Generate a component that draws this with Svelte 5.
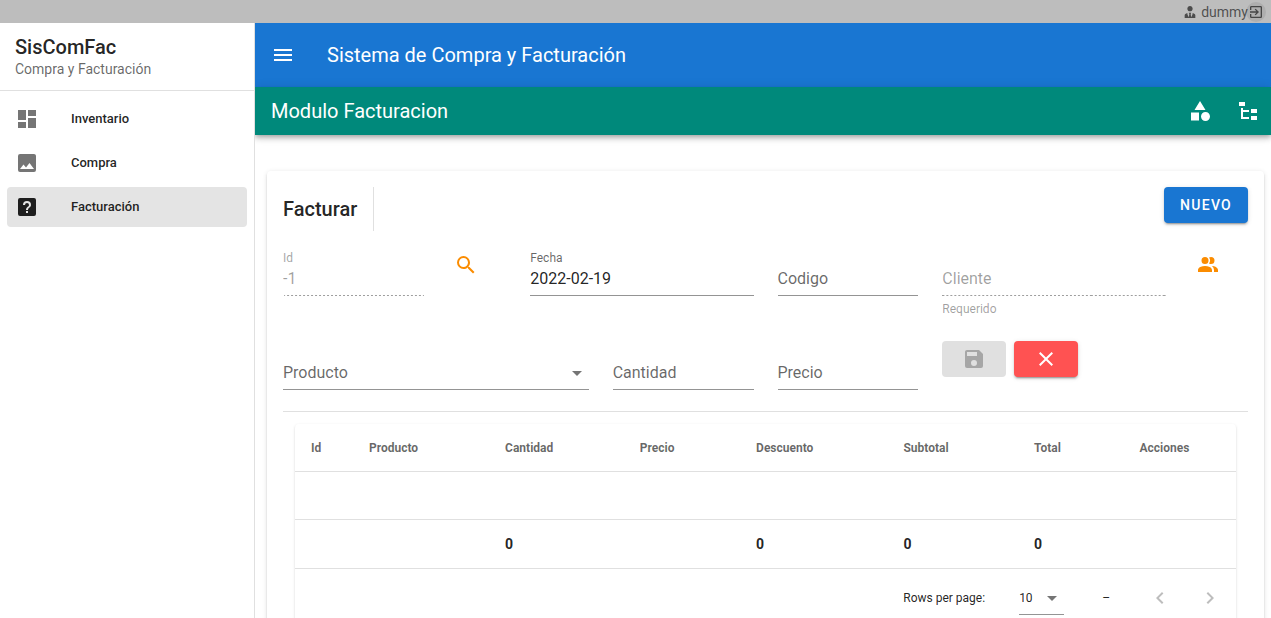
<script>
  const icons = {
    dashboard: 'M13,3V9H21V3M13,21H21V11H13M3,21H11V15H3M3,13H11V3H3V13Z',
    image: 'M8.5,13.5L11,16.5L14.5,12L19,18H5M21,19V5C21,3.89 20.1,3 19,3H5A2,2 0 0,0 3,5V19A2,2 0 0,0 5,21H19A2,2 0 0,0 21,19Z',
    help: 'M11,18H13V16H11V18M12,6A4,4 0 0,0 8,10H10A2,2 0 0,1 12,8A2,2 0 0,1 14,10C14,12 11,11.75 11,15H13C13,12.75 16,12.5 16,10A4,4 0 0,0 12,6M5,3H19A2,2 0 0,1 21,5V19A2,2 0 0,1 19,21H5A2,2 0 0,1 3,19V5A2,2 0 0,1 5,3Z',
    menu: 'M3,6H21V8H3V6M3,11H21V13H3V11M3,16H21V18H3V16Z',
    shape: 'M11,13.5V21.5H3V13.5H11M12,2L17.5,11H6.5L12,2M17.5,13C20,13 22,15 22,17.5C22,20 20,22 17.5,22C15,22 13,20 13,17.5C13,15 15,13 17.5,13Z',
    tree: 'M3,3H9V7H3V3M15,10H21V14H15V10M15,17H21V21H15V17M13,13H7V18H13V20H7L5,20V9H7V11H13V13Z',
    magnify: 'M9.5,3A6.5,6.5 0 0,1 16,9.5C16,11.11 15.41,12.59 14.44,13.73L14.71,14H15.5L20.5,19L19,20.5L14,15.5V14.71L13.73,14.44C12.59,15.41 11.11,16 9.5,16A6.5,6.5 0 0,1 3,9.5A6.5,6.5 0 0,1 9.5,3M9.5,5C7,5 5,7 5,9.5C5,12 7,14 9.5,14C12,14 14,12 14,9.5C14,7 12,5 9.5,5Z',
    people: 'M16 17V19H2V17S2 13 9 13 16 17 16 17M12.5 7.5A3.5 3.5 0 1 0 9 11A3.5 3.5 0 0 0 12.5 7.5M15.94 13A5.32 5.32 0 0 1 18 17V19H22V17S22 13.37 15.94 13M15 4A3.39 3.39 0 0 0 13.07 4.59A5 5 0 0 1 13.07 10.41A3.39 3.39 0 0 0 15 11A3.5 3.5 0 0 0 15 4Z',
    save: 'M15,9H5V5H15M12,19A3,3 0 0,1 9,16A3,3 0 0,1 12,13A3,3 0 0,1 15,16A3,3 0 0,1 12,19M17,3H5C3.89,3 3,3.9 3,5V19A2,2 0 0,0 5,21H19A2,2 0 0,0 21,19V7L17,3Z',
    close: 'M19,6.41L17.59,5L12,10.59L6.41,5L5,6.41L10.59,12L5,17.59L6.41,19L12,13.41L17.59,19L19,17.59L13.41,12L19,6.41Z',
    exit: 'M19,3H5C3.89,3 3,3.89 3,5V9H5V5H19V19H5V15H3V19A2,2 0 0,0 5,21H19A2,2 0 0,0 21,19V5C21,3.89 20.1,3 19,3M10.08,15.58L11.5,17L16.5,12L11.5,7L10.08,8.41L12.67,11H3V13H12.67L10.08,15.58Z',
    tie: 'M12 3C14.21 3 16 4.79 16 7S14.21 11 12 11 8 9.21 8 7 9.79 3 12 3M16 13.54C16 14.6 15.72 17.07 13.81 19.83L13 15L13.94 13.12C13.32 13.05 12.67 13 12 13S10.68 13.05 10.06 13.12L11 15L10.19 19.83C8.28 17.07 8 14.6 8 13.54C5.61 14.24 4 15.5 4 17V21H20V17C20 15.5 18.4 14.24 16 13.54Z',
    caret: 'M7,10L12,15L17,10H7Z',
    left: 'M15.41,16.58L10.83,12L15.41,7.41L14,6L8,12L14,18L15.41,16.58Z',
    right: 'M8.59,16.58L13.17,12L8.59,7.41L10,6L16,12L10,18L8.59,16.58Z',
  };

  const nav = [
    { label: 'Inventario', icon: 'dashboard' },
    { label: 'Compra', icon: 'image' },
    { label: 'Facturación', icon: 'help', active: true },
  ];

  const columns = [
    { label: 'Id' },
    { label: 'Producto', sortable: true },
    { label: 'Cantidad', sortable: true, total: 0 },
    { label: 'Precio', sortable: true },
    { label: 'Descuento', sortable: true, total: 0 },
    { label: 'Subtotal', sortable: true, total: 0 },
    { label: 'Total', sortable: true, total: 0 },
    { label: 'Acciones' },
  ];

  let fecha = $state('2022-02-19');
  let codigo = $state('');
  let cantidad = $state('');
  let precio = $state('');
  let producto = $state('');
  let rows = $state('10');
</script>

{#snippet icon(name, size = 24)}
  <svg viewBox="0 0 24 24" width={size} height={size} aria-hidden="true"><path d={icons[name]} /></svg>
{/snippet}

<div class="app">
  <div class="system-bar">
    {@render icon('tie', 16)}
    <span>dummy</span>
    <button class="exit" aria-label="Salir">{@render icon('exit', 16)}</button>
  </div>

  <div class="shell">
    <aside class="drawer">
      <div class="brand">
        <div class="brand-title">SisComFac</div>
        <div class="brand-sub">Compra y Facturación</div>
      </div>
      <nav>
        {#each nav as item}
          <a href="#{item.icon}" class:active={item.active}>
            {@render icon(item.icon)}
            <span>{item.label}</span>
          </a>
        {/each}
      </nav>
    </aside>

    <div class="content">
      <header class="app-bar">
        <button class="icon-btn" aria-label="Menú">{@render icon('menu')}</button>
        <h1>Sistema de Compra y Facturación</h1>
      </header>
      <div class="module-bar">
        <h2>Modulo Facturacion</h2>
        <button class="icon-btn" aria-label="Categorías">{@render icon('shape')}</button>
        <button class="icon-btn" aria-label="Árbol">{@render icon('tree')}</button>
      </div>

      <main>
        <section class="card">
          <div class="card-head">
            <h3>Facturar</h3>
            <button class="btn primary">NUEVO</button>
          </div>

          <form class="form">
            <div class="field span2 disabled">
              <label class="float" for="id">Id</label>
              <input id="id" type="text" value="-1" disabled />
            </div>
            <div>
              <button type="button" class="icon-btn accent" aria-label="Buscar">{@render icon('magnify')}</button>
            </div>
            <div class="field span3">
              <label class="float" for="fecha">Fecha</label>
              <input id="fecha" type="text" bind:value={fecha} />
            </div>
            <div class="field span2">
              <label class:float={codigo} for="codigo">Codigo</label>
              <input id="codigo" type="text" bind:value={codigo} />
            </div>
            <div class="field span3 disabled">
              <label for="cliente">Cliente</label>
              <input id="cliente" type="text" disabled />
              <div class="hint">Requerido</div>
            </div>
            <div>
              <button type="button" class="icon-btn accent" aria-label="Clientes">{@render icon('people')}</button>
            </div>

            <div class="field span4">
              <label class:float={producto} for="producto">Producto</label>
              <select id="producto" bind:value={producto}><option value=""></option></select>
              <span class="caret">{@render icon('caret')}</span>
            </div>
            <div class="field span2">
              <label class:float={cantidad} for="cantidad">Cantidad</label>
              <input id="cantidad" type="text" bind:value={cantidad} />
            </div>
            <div class="field span2">
              <label class:float={precio} for="precio">Precio</label>
              <input id="precio" type="text" bind:value={precio} />
            </div>
            <div class="actions span4">
              <button type="button" class="btn" disabled aria-label="Guardar">{@render icon('save')}</button>
              <button type="button" class="btn danger" aria-label="Cancelar">{@render icon('close')}</button>
            </div>
          </form>

          <hr />

          <div class="table-card">
            <table>
              <thead>
                <tr>
                  {#each columns as c}<th class:sortable={c.sortable}>{c.label}</th>{/each}
                </tr>
              </thead>
              <tbody>
                <tr><td colspan="8"></td></tr>
                <tr class="totals">
                  {#each columns as c}<td>{c.total ?? ''}</td>{/each}
                </tr>
              </tbody>
            </table>
            <div class="pager">
              <label for="rows">Rows per page:</label>
              <div class="rows">
                <select id="rows" bind:value={rows}><option>10</option></select>
                <span class="caret">{@render icon('caret')}</span>
              </div>
              <span class="range">–</span>
              <button class="icon-btn" disabled aria-label="Anterior">{@render icon('left')}</button>
              <button class="icon-btn" disabled aria-label="Siguiente">{@render icon('right')}</button>
            </div>
          </div>
        </section>
      </main>
    </div>
  </div>
</div>

<style>
  :global(body) {
    background: #fff;
  }
  .app {
    display: flex;
    flex-direction: column;
    height: 100vh;
    overflow: hidden;
    font-family: Roboto, sans-serif;
    font-size: 16px;
    line-height: 24px;
    color: rgba(0, 0, 0, 0.87);
  }
  .app *,
  .app *::before {
    box-sizing: border-box;
  }
  svg {
    display: block;
    flex: none;
    fill: currentColor;
  }
  h1,
  h2,
  h3 {
    margin: 0;
    font-size: 20px;
    font-weight: 400;
  }
  button,
  input,
  select {
    margin: 0;
    padding: 0;
    border: 0;
    font: inherit;
    color: inherit;
    background: none;
    outline: none;
    border-radius: 0;
  }
  select {
    appearance: none;
  }

  .system-bar {
    flex: none;
    display: flex;
    align-items: center;
    justify-content: flex-end;
    height: 23px;
    padding-right: 7px;
    background: #bdbdbd;
    color: rgba(0, 0, 0, 0.6);
    font-size: 14px;
  }
  .system-bar span {
    margin-left: 3px;
  }
  .exit {
    position: relative;
    height: 16px;
  }
  .exit::before {
    content: '';
    position: absolute;
    inset: -2px;
    border-radius: 50%;
    background: rgba(0, 0, 0, 0.08);
  }

  .shell {
    flex: 1;
    display: flex;
    min-height: 0;
  }
  .drawer {
    position: relative;
    z-index: 1;
    flex: none;
    width: 255px;
    background: #fff;
    border-right: 1px solid #e0e0e0;
  }
  .brand {
    padding: 12px 15px 10px;
    border-bottom: 1px solid #e0e0e0;
  }
  .brand-title {
    font-size: 20px;
    font-weight: 500;
  }
  .brand-sub {
    font-size: 14px;
    line-height: 21px;
    color: rgba(0, 0, 0, 0.6);
  }
  nav {
    display: flex;
    flex-direction: column;
    gap: 4px;
    padding: 8px 7px;
  }
  nav a {
    display: flex;
    align-items: center;
    gap: 32px;
    height: 40px;
    padding: 0 8px;
    border-radius: 4px;
    color: inherit;
    text-decoration: none;
    font-size: 13px;
    font-weight: 500;
  }
  nav svg {
    color: rgba(0, 0, 0, 0.54);
  }
  nav a.active {
    background: #e4e4e4;
  }
  nav a.active svg {
    color: rgba(0, 0, 0, 0.87);
  }

  .content {
    flex: 1;
    min-width: 0;
    display: flex;
    flex-direction: column;
  }
  .app-bar,
  .module-bar {
    flex: none;
    display: flex;
    align-items: center;
    color: #fff;
  }
  .app-bar {
    height: 64px;
    gap: 26px;
    padding: 0 10px;
    background: #1976d2;
  }
  .module-bar {
    position: relative;
    gap: 12px;
    height: 48px;
    padding: 0 5px 0 16px;
    background: #00897b;
    box-shadow: 0 2px 4px -1px rgba(0, 0, 0, 0.2), 0 4px 5px rgba(0, 0, 0, 0.14), 0 1px 10px rgba(0, 0, 0, 0.12);
  }
  .module-bar h2 {
    flex: 1;
  }
  .icon-btn {
    flex: none;
    display: flex;
    align-items: center;
    justify-content: center;
    width: 36px;
    height: 36px;
  }
  .accent {
    color: #fb8c00;
  }
  .icon-btn:disabled {
    color: rgba(0, 0, 0, 0.26);
  }

  main {
    flex: 1;
    min-height: 0;
    overflow-y: auto;
    scrollbar-width: none;
    padding: 36px 7px 12px 12px;
  }
  .card {
    padding: 16px;
    border-radius: 4px;
    background: #fff;
    box-shadow: 0 3px 1px -2px rgba(0, 0, 0, 0.2), 0 2px 2px rgba(0, 0, 0, 0.14), 0 1px 5px rgba(0, 0, 0, 0.12);
  }
  .card-head {
    display: flex;
    justify-content: space-between;
    align-items: flex-start;
  }
  h3 {
    padding-right: 16px;
    border-right: 1px solid #e0e0e0;
    line-height: 44px;
    font-weight: 500;
  }
  .btn {
    display: flex;
    align-items: center;
    justify-content: center;
    min-width: 64px;
    height: 36px;
    padding: 0 16px;
    border-radius: 4px;
    font-size: 14px;
    font-weight: 500;
    letter-spacing: 0.09em;
    color: #fff;
    box-shadow: 0 3px 1px -2px rgba(0, 0, 0, 0.2), 0 2px 2px rgba(0, 0, 0, 0.14), 0 1px 5px rgba(0, 0, 0, 0.12);
  }
  .btn:disabled {
    background: #e0e0e0;
    color: rgba(0, 0, 0, 0.26);
    box-shadow: none;
  }
  .primary {
    background: #1976d2;
  }
  .danger {
    background: #ff5252;
  }

  .form {
    display: grid;
    grid-template-columns: repeat(12, minmax(0, 1fr));
    gap: 24px;
    margin-top: 16px;
  }
  .span2 {
    grid-column: span 2;
  }
  .span3 {
    grid-column: span 3;
  }
  .span4 {
    grid-column: span 4;
  }
  .field {
    display: grid;
    grid-template: 17px 32px 21px / minmax(0, 1fr);
  }
  .field label {
    grid-area: 2 / 1;
    line-height: 29px;
    color: rgba(0, 0, 0, 0.6);
    pointer-events: none;
  }
  .field label.float {
    grid-area: 1 / 1;
    font-size: 12px;
    line-height: 23px;
  }
  .field input,
  .field select {
    grid-area: 2 / 1;
    width: 100%;
    min-width: 0;
    height: 32px;
    padding-bottom: 2px;
    border-bottom: 1px solid rgba(0, 0, 0, 0.42);
  }
  .disabled input {
    border-bottom: 1px solid;
    border-image: repeating-linear-gradient(90deg, rgba(0, 0, 0, 0.38) 0, rgba(0, 0, 0, 0.38) 2px, transparent 2px, transparent 4px) 1 repeat;
  }
  .disabled input,
  .disabled label,
  .disabled .hint {
    color: rgba(0, 0, 0, 0.38);
  }
  .hint {
    grid-area: 3 / 1;
    padding-top: 6px;
    font-size: 12px;
    line-height: 15px;
  }
  .caret {
    color: rgba(0, 0, 0, 0.54);
    pointer-events: none;
  }
  .field .caret {
    grid-area: 2 / 1;
    justify-self: end;
    padding-top: 3px;
  }
  .actions {
    display: flex;
    align-items: flex-start;
    gap: 8px;
  }
  hr {
    height: 1px;
    margin: 0 0 12px;
    border: 0;
    background: #e0e0e0;
  }

  .table-card {
    margin: 0 12px;
    border-radius: 4px;
    box-shadow: 0 2px 1px -1px rgba(0, 0, 0, 0.2), 0 1px 1px rgba(0, 0, 0, 0.14), 0 1px 3px rgba(0, 0, 0, 0.12);
  }
  table {
    width: 100%;
    border-collapse: separate;
    border-spacing: 0;
  }
  th,
  td {
    height: 48px;
    padding: 0 16px;
    border-bottom: 1px solid #e0e0e0;
    text-align: left;
  }
  th {
    font-size: 12px;
    font-weight: 700;
    color: rgba(0, 0, 0, 0.6);
  }
  th.sortable {
    padding-right: 34px;
  }
  .totals td {
    height: 49px;
    font-size: 14px;
    font-weight: 700;
  }
  .pager {
    display: flex;
    align-items: center;
    justify-content: flex-end;
    height: 58px;
    padding: 0 8px;
    font-size: 12px;
  }
  .rows {
    display: grid;
    width: 45px;
    margin: 0 38px 0 34px;
  }
  .rows select {
    grid-area: 1 / 1;
    width: 100%;
    height: 34px;
    border-bottom: 1px solid rgba(0, 0, 0, 0.42);
  }
  .rows .caret {
    grid-area: 1 / 1;
    justify-self: end;
    align-self: center;
  }
  .range {
    margin-right: 32px;
  }
  .pager .icon-btn + .icon-btn {
    margin-left: 14px;
  }
</style>
